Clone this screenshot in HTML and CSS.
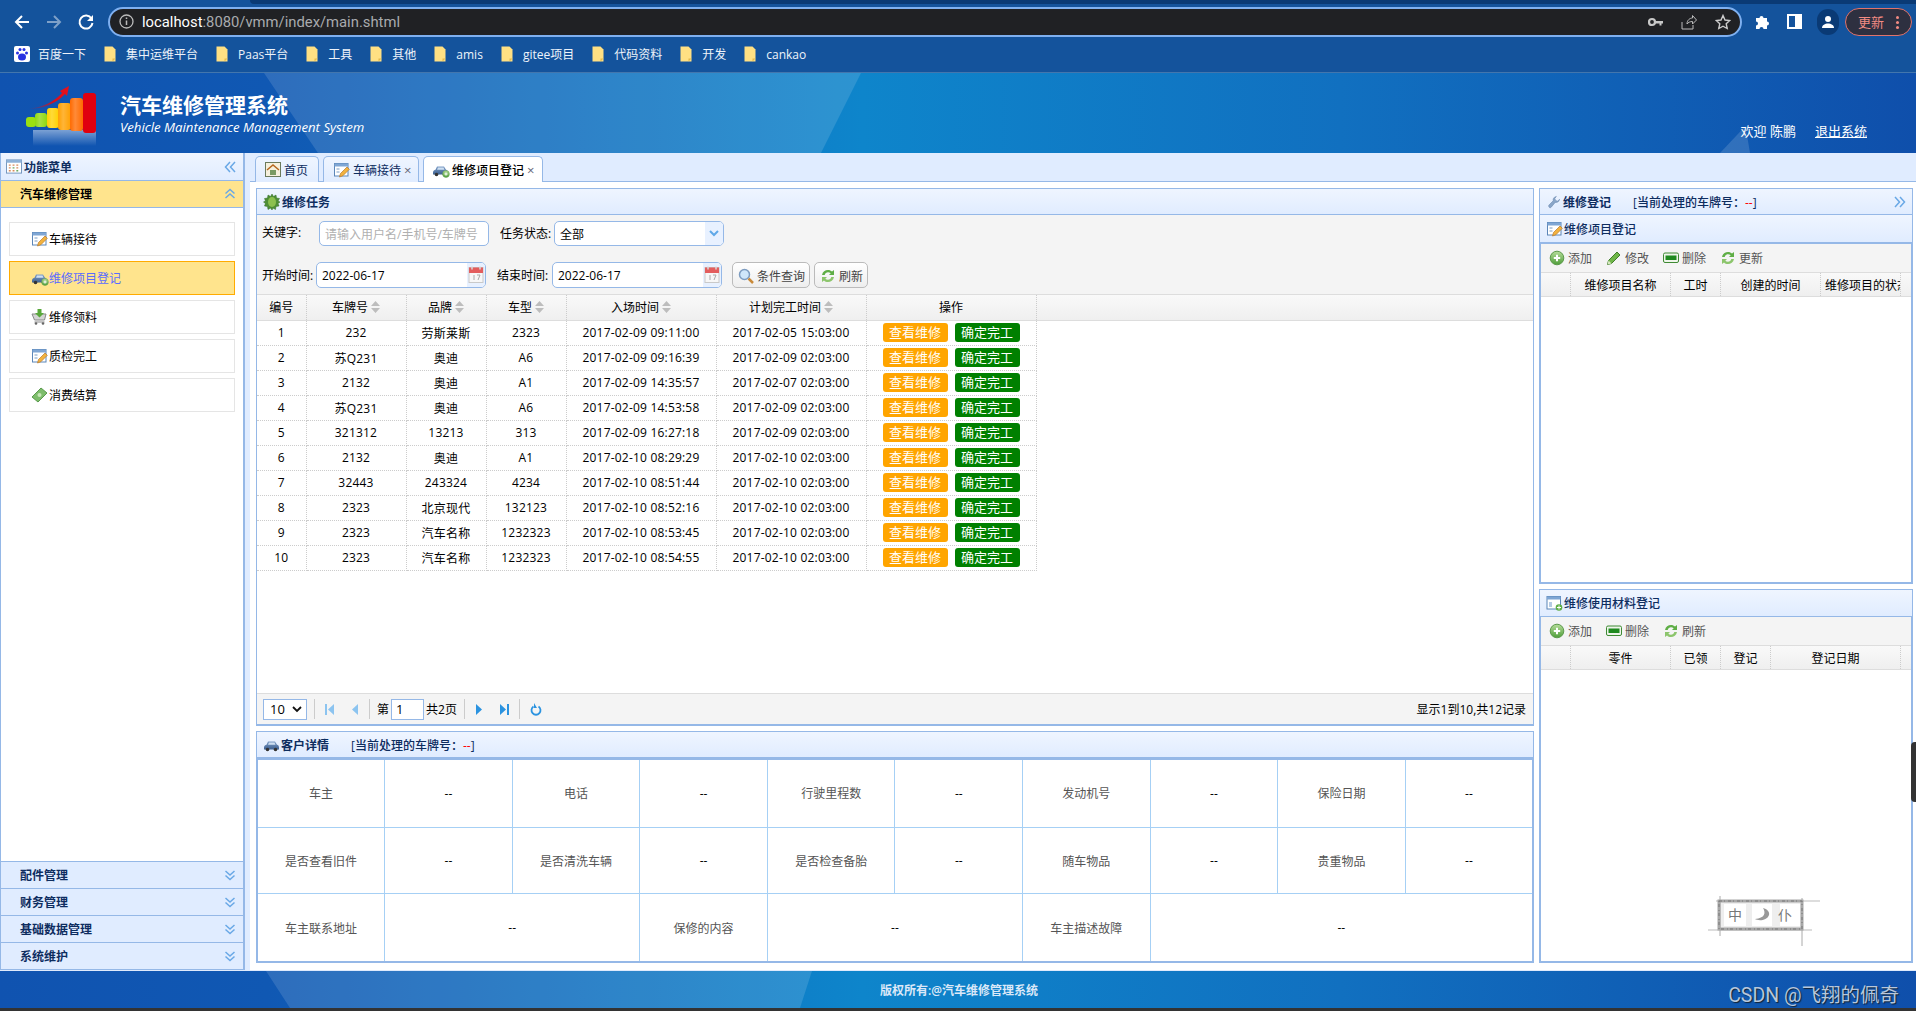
FILE: index.html
```html
<!DOCTYPE html>
<html lang="zh-CN">
<head>
  <meta charset="UTF-8">
  <title>汽车维修管理系统</title>
  <link rel="stylesheet" href="styles.css">
</head>
<body>

  <!-- icons used more than once -->
  <svg class="defs" width="0" height="0">
    <defs>
      <linearGradient id="gGreen" x1="0" y1="0" x2="0" y2="1"><stop offset="0" stop-color="#b6dd9a"/><stop offset="1" stop-color="#4f9e3a"/></linearGradient>
      <linearGradient id="gCar" x1="0" y1="0" x2="0" y2="1"><stop offset="0" stop-color="#7f9fc8"/><stop offset="1" stop-color="#3c5f8f"/></linearGradient>
      <symbol id="i-form" viewBox="0 0 16 16">
        <rect x="1" y="1.500" width="13.500" height="12.500" fill="#fff" stroke="#5b86b8"/>
        <rect x="1" y="1.500" width="13.500" height="3" fill="#7fa6d4"/>
        <path d="M3 7h3M3 10h3" stroke="#7a9cc4"/>
        <path d="M6 15l1-3.500 6.500-6.500 2.300 2.300-6.500 6.500z" fill="#f2b23e" stroke="#b9792a" stroke-width=".7"/>
      </symbol>
      <symbol id="i-car" viewBox="0 0 17 16">
        <path d="M1 10.500c0-2 1.500-2.500 2.500-2.800l1.500-3.200h7l2 3.200c1.200.3 2 1 2 2.800v2h-15z" fill="url(#gCar)"/>
        <path d="M6 5.500h5.500l1 2.200h-7.500z" fill="#cfe0f2"/>
        <circle cx="4.500" cy="12.500" r="1.800" fill="#333"/>
        <circle cx="12.500" cy="12.500" r="1.800" fill="#333"/>
      </symbol>
      <symbol id="i-plus" viewBox="0 0 16 16">
        <circle cx="8" cy="8" r="6.800" fill="url(#gGreen)" stroke="#5d9a4c"/>
        <path d="M8 4.800v6.400M4.800 8h6.400" stroke="#fff" stroke-width="2"/>
      </symbol>
      <symbol id="i-pen" viewBox="0 0 16 16">
        <path d="M1.500 14.500l1-4 8.500-8.500 3 3-8.500 8.500z" fill="#6fb648" stroke="#3f7d2a"/>
        <path d="M1.500 14.500l1-4 3 3z" fill="#d8e8c0"/>
      </symbol>
      <symbol id="i-del" viewBox="0 0 16 16">
        <rect x=".5" y="3" width="15" height="9.500" rx="1.500" fill="#eef5ea" stroke="#3f8a34"/>
        <rect x="2.500" y="5.500" width="11" height="4.500" fill="#1f8a1f"/>
      </symbol>
      <symbol id="i-reload" viewBox="0 0 16 16">
        <path d="M2 7c.6-3.200 3.200-5 6-5 1.700 0 3 .6 4 1.600L14 2v5h-5l1.700-1.700C10 4.600 9 4.300 8 4.300c-1.500 0-2.800.9-3.300 2.700z" fill="#5fae46"/>
        <path d="M14 9c-.6 3.200-3.200 5-6 5-1.700 0-3-.6-4-1.600L2 14V9h5l-1.700 1.700c.7.7 1.700 1 2.700 1 1.500 0 2.800-.9 3.300-2.700z" fill="#8cc56c"/>
      </symbol>
      <symbol id="i-cal" viewBox="0 0 16 18">
        <rect x="1" y="1.500" width="14" height="15" fill="#f7f7f7" stroke="#c9c9c9"/>
        <rect x="1" y="1.500" width="14" height="5.500" fill="#e35d5d"/>
        <path d="M4 .5v3M12 .5v3" stroke="#d9d9d9" stroke-width="1.500"/>
        <path d="M6 9v5M9 9h3l-2 5" stroke="#aaa" fill="none"/>
      </symbol>
      <symbol id="i-dbl" viewBox="0 0 12 12">
        <path d="M1.500 5.500L6 1.500l4.500 4M1.500 10L6 6l4.500 4" fill="none" stroke="#69a8e6" stroke-width="1.500"/>
      </symbol>
      <symbol id="i-folder" viewBox="0 0 12 16">
        <path d="M.5.500h8l3 3v12h-11z" fill="#ffe083"/>
        <path d="M8.500 15.500l3-3h-3z" fill="#e5b94c"/>
      </symbol>
      <symbol id="i-sort" viewBox="0 0 9 12">
        <path d="M4.500 0L9 5H0zM4.500 12L0 7h9z" fill="#bdbdbd"/>
      </symbol>
    </defs>
  </svg>

  <!-- browser chrome -->
  <div class="chrome">
    <div class="tabstrip"></div>
    <div class="toolbar">
      <svg class="nav" width="18" height="18" viewBox="0 0 18 18"><path d="M16 9H3M9 3L3 9l6 6" fill="none" stroke="#fff" stroke-width="2"/></svg>
      <svg class="nav dim" width="18" height="18" viewBox="0 0 18 18"><path d="M2 9h13M9 3l6 6-6 6" fill="none" stroke="#7ea0c8" stroke-width="2"/></svg>
      <svg class="nav" width="18" height="18" viewBox="0 0 18 18"><path d="M14.500 5.500A6.500 6.500 0 1 0 15.500 10" fill="none" stroke="#fff" stroke-width="2"/><path d="M16 2v6h-6z" fill="#fff"/></svg>
      <div class="addr">
        <svg width="15" height="15" viewBox="0 0 15 15"><circle cx="7.500" cy="7.500" r="6.500" fill="none" stroke="#bbb" stroke-width="1.300"/><path d="M7.500 6.500v4.500M7.500 3.500v1.500" stroke="#bbb" stroke-width="1.500"/></svg>
        <span class="url"><b>localhost</b>:8080/vmm/index/main.shtml</span>
        <div class="addr-tools">
          <svg width="15" height="10" viewBox="0 0 15 10"><circle cx="4" cy="5" r="3" fill="none" stroke="#c8c8c8" stroke-width="2.200"/><path d="M7 4h8v2.500h-1.500v2h-2v-2H7z" fill="#c8c8c8"/></svg>
          <svg width="16" height="16" viewBox="0 0 16 16"><path d="M1 8v7h11v-4M6 10c0-4 3-6 5.500-6V1.500L15.500 6l-4 4V7.500C9 7.500 7 8.500 6 10z" fill="none" stroke="#bbb"/></svg>
          <svg width="16" height="16" viewBox="0 0 16 16"><path d="M8 1.500l2 4.500 4.800.500-3.600 3.200 1 4.800L8 12.200l-4.200 2.300 1-4.800L1.200 6.500 6 6z" fill="none" stroke="#ccc" stroke-width="1.400"/></svg>
        </div>
      </div>
      <div class="bar-tools">
        <svg width="16" height="16" viewBox="0 0 16 16"><path d="M2 4h3.500a2 2 0 1 1 4 0H13v3.500a2 2 0 1 1 0 4V15H9.500a2 2 0 1 0-4 0H2v-3.500a2 2 0 1 0 0-4z" fill="#fff"/></svg>
        <svg width="15" height="15" viewBox="0 0 15 15"><rect width="15" height="15" fill="#fff"/><rect x="2" y="2" width="6" height="11" fill="#14539c"/></svg>
        <span class="avatar"><svg width="14" height="14" viewBox="0 0 14 14"><circle cx="7" cy="4" r="3" fill="#fff"/><path d="M1 13c0-3 3-4.500 6-4.500s6 1.500 6 4.500z" fill="#fff"/></svg></span>
        <div class="update">更新<i class="dots"></i></div>
      </div>
    </div>
    <div class="bookmarks">
      <div class="bm baidu">
        <svg width="16" height="16" viewBox="0 0 16 16"><rect width="16" height="16" rx="2" fill="#fff"/><ellipse cx="8" cy="11" rx="4" ry="3.500" fill="#2932e1"/><circle cx="3.500" cy="7" r="1.500" fill="#2932e1"/><circle cx="12.500" cy="7" r="1.500" fill="#2932e1"/><circle cx="6" cy="3.500" r="1.500" fill="#2932e1"/><circle cx="10" cy="3.500" r="1.500" fill="#2932e1"/></svg>
        百度一下
      </div>
      <div class="bm"><svg width="12" height="16"><use href="#i-folder"/></svg>集中运维平台</div>
      <div class="bm"><svg width="12" height="16"><use href="#i-folder"/></svg>Paas平台</div>
      <div class="bm"><svg width="12" height="16"><use href="#i-folder"/></svg>工具</div>
      <div class="bm"><svg width="12" height="16"><use href="#i-folder"/></svg>其他</div>
      <div class="bm"><svg width="12" height="16"><use href="#i-folder"/></svg>amis</div>
      <div class="bm"><svg width="12" height="16"><use href="#i-folder"/></svg>gitee项目</div>
      <div class="bm"><svg width="12" height="16"><use href="#i-folder"/></svg>代码资料</div>
      <div class="bm"><svg width="12" height="16"><use href="#i-folder"/></svg>开发</div>
      <div class="bm"><svg width="12" height="16"><use href="#i-folder"/></svg>cankao</div>
    </div>
  </div>

  <!-- 顶部 -->
  <div class="banner">
    <svg class="logo" width="76" height="64" viewBox="0 0 76 64">
      <defs>
        <linearGradient id="fade" x1="0" y1="0" x2="0" y2="1"><stop offset="0" stop-color="#fff" stop-opacity=".45"/><stop offset="1" stop-color="#fff" stop-opacity="0"/></linearGradient>
        <linearGradient id="shade" x1="0" y1="0" x2="1" y2="0"><stop offset="0" stop-color="#fff" stop-opacity="0"/><stop offset=".4" stop-color="#fff" stop-opacity=".22"/><stop offset="1" stop-color="#fff" stop-opacity="0"/></linearGradient>
        <linearGradient id="tail" x1="0" y1="1" x2="1" y2="0"><stop offset="0" stop-color="#d8101c" stop-opacity="0"/><stop offset=".5" stop-color="#d8101c"/><stop offset="1" stop-color="#e8101c"/></linearGradient>
      </defs>
      <rect x="8" y="44" width="63" height="16" fill="url(#fade)"/>
      <rect x="1" y="31" width="10" height="10" rx="3" fill="#9ae010"/>
      <rect x="10" y="27" width="12" height="14" rx="3" fill="#8fd810"/>
      <rect x="22" y="22" width="12" height="20" rx="3" fill="#ffd000"/>
      <rect x="33" y="17" width="13" height="27" rx="3" fill="#ffa000"/>
      <rect x="45" y="12" width="13" height="33" rx="3" fill="#ff6a00"/>
      <rect x="58" y="7" width="13" height="40" rx="3" fill="#e0000f"/>
      <rect x="10" y="27" width="12" height="14" rx="3" fill="url(#shade)"/>
      <rect x="22" y="22" width="12" height="20" rx="3" fill="url(#shade)"/>
      <rect x="33" y="17" width="13" height="27" rx="3" fill="url(#shade)"/>
      <rect x="45" y="12" width="13" height="33" rx="3" fill="url(#shade)"/>
      <path d="M3 23c15-2 26-7 34-16l-2-2 9-5-2 10-2-2C32 17 18 23 3 23z" fill="url(#tail)"/>
    </svg>
    <div class="brand">
      <div class="brand-cn">汽车维修管理系统</div>
      <div class="brand-en">Vehicle Maintenance Management System</div>
    </div>
    <div class="user">
      <span>欢迎 陈鹏</span>
      <a class="logout">退出系统</a>
    </div>
  </div>

  <div class="main">

    <!-- 左侧菜单 -->
    <div class="side">
      <div class="side-title">
        <svg width="16" height="15" viewBox="0 0 17 15"><rect x=".5" y=".5" width="16" height="14" fill="#fff" stroke="#6f93bd"/><rect x=".5" y=".5" width="16" height="3" fill="#8fb2d8"/><path d="M3 6h2M7 6h2M11 6h2M3 9h2M11 9h2M3 12h2M7 12h2" stroke="#d98a5a" stroke-width="1.500"/><path d="M7 9h2M11 12h2" stroke="#6aa860" stroke-width="1.500"/></svg>
        <span>功能菜单</span>
        <svg class="collapse" width="12" height="12" viewBox="0 0 12 12"><path d="M6 1L1.500 6 6 11M11 1L6.500 6 11 11" fill="none" stroke="#69a8e6" stroke-width="1.500"/></svg>
      </div>
      <div class="acc-head active">
        <span>汽车维修管理</span>
        <svg width="12" height="12"><use href="#i-dbl"/></svg>
      </div>
      <div class="acc-body">
        <div class="menu-item"><svg width="17" height="16"><use href="#i-form"/></svg>车辆接待</div>
        <div class="menu-item current"><span class="car-add"><svg width="17" height="16"><use href="#i-car"/></svg><svg class="mini" width="8" height="8"><use href="#i-plus"/></svg></span>维修项目登记</div>
        <div class="menu-item">
          <svg width="17" height="16" viewBox="0 0 17 16"><path d="M1 5h14l-1.500 6h-10z" fill="#d4d4d4" stroke="#888"/><path d="M3.500 13h10" stroke="#888"/><circle cx="5" cy="14.500" r="1.300" fill="#666"/><circle cx="12" cy="14.500" r="1.300" fill="#666"/><path d="M6.500 0h4v4h2.500L8.500 8.500 4 4h2.500z" fill="#58a83a"/></svg>
          维修领料
        </div>
        <div class="menu-item"><svg width="17" height="16"><use href="#i-form"/></svg>质检完工</div>
        <div class="menu-item">
          <svg width="17" height="16" viewBox="0 0 17 16"><path d="M1 10l9-9 6 5-9 9z" fill="#7dbd6b" stroke="#5a9a4c"/><circle cx="8.500" cy="8" r="2" fill="#c7e6b8"/></svg>
          消费结算
        </div>
      </div>
      <div class="acc-head"><span>配件管理</span><svg class="down" width="12" height="12"><use href="#i-dbl"/></svg></div>
      <div class="acc-head"><span>财务管理</span><svg class="down" width="12" height="12"><use href="#i-dbl"/></svg></div>
      <div class="acc-head"><span>基础数据管理</span><svg class="down" width="12" height="12"><use href="#i-dbl"/></svg></div>
      <div class="acc-head"><span>系统维护</span><svg class="down" width="12" height="12"><use href="#i-dbl"/></svg></div>
    </div>

    <!-- 内容区 -->
    <div class="content">
      <div class="tabs">
        <div class="tab">
          <svg width="16" height="15" viewBox="0 0 16 15"><rect x=".5" y=".5" width="15" height="14" fill="#f6f0dc" stroke="#6b7a5c"/><path d="M2 8l6-5 6 5" fill="none" stroke="#b5651d" stroke-width="1.500"/><rect x="5" y="8" width="6" height="5" fill="#7a9a62"/></svg>
          首页
        </div>
        <div class="tab"><svg width="17" height="16"><use href="#i-form"/></svg>车辆接待<i class="close">×</i></div>
        <div class="tab selected"><span class="car-add"><svg width="17" height="16"><use href="#i-car"/></svg><svg class="mini" width="8" height="8"><use href="#i-plus"/></svg></span>维修项目登记<i class="close">×</i></div>
      </div>

      <div class="tab-body">
        <div class="col-center">

          <div class="panel task">
            <div class="panel-head">
              <svg width="18" height="18" viewBox="0 0 18 18"><path d="M9 1l1.500 2.500L13 2l.5 3 3 .5-1.500 2.500 2 1-2 1.500 1 2.500-3 .5-.5 3-2.500-1.500L9 17l-1.500-2-2.500 1.500-.5-3-3-.5 1-2.500-2-1.500 2-1L1.500 5.500l3-.5L5 2l2.500 1.500z" fill="#4f8e35" stroke="#2e6a20" stroke-width=".5"/><ellipse cx="9" cy="9" rx="4" ry="5" fill="#8cc04f"/></svg>
              <span>维修任务</span>
            </div>
            <div class="filters">
              <div class="filter-row first">
                <label class="lbl-key">关键字:</label>
                <div class="field keyword"><span class="ph">请输入用户名/手机号/车牌号</span></div>
                <label class="lbl-status">任务状态:</label>
                <div class="field select"><span>全部</span>
                  <i class="addon"><svg width="10" height="7" viewBox="0 0 10 7"><path d="M1 1l4 4 4-4" fill="none" stroke="#5fa8e8" stroke-width="2"/></svg></i>
                </div>
              </div>
              <div class="filter-row">
                <label>开始时间:</label>
                <div class="field date"><span>2022-06-17</span><i class="addon"><svg width="16" height="18"><use href="#i-cal"/></svg></i></div>
                <label class="lbl-end">结束时间:</label>
                <div class="field date"><span>2022-06-17</span><i class="addon"><svg width="16" height="18"><use href="#i-cal"/></svg></i></div>
                <div class="btn search">
                  <svg width="16" height="16" viewBox="0 0 16 16"><circle cx="6.500" cy="6.500" r="5" fill="#cfe6fa" stroke="#7d9cc0" stroke-width="1.500"/><path d="M10.500 10.500L15 15" stroke="#c98a3a" stroke-width="2.500"/></svg>
                  条件查询
                </div>
                <div class="btn"><svg width="16" height="16"><use href="#i-reload"/></svg>刷新</div>
              </div>
            </div>

            <div class="grid-wrap">
              <table class="grid">
                <colgroup>
                  <col class="w49"><col class="w100"><col class="w80"><col class="w80"><col class="w150"><col class="w150"><col class="w170">
                </colgroup>
                <thead>
                  <tr>
                    <th>编号</th>
                    <th>车牌号<svg class="sort" width="9" height="12"><use href="#i-sort"/></svg></th>
                    <th>品牌<svg class="sort" width="9" height="12"><use href="#i-sort"/></svg></th>
                    <th>车型<svg class="sort" width="9" height="12"><use href="#i-sort"/></svg></th>
                    <th>入场时间<svg class="sort" width="9" height="12"><use href="#i-sort"/></svg></th>
                    <th>计划完工时间<svg class="sort" width="9" height="12"><use href="#i-sort"/></svg></th>
                    <th>操作</th>
                  </tr>
                </thead>
                <tbody>
                  <tr><td>1</td><td>232</td><td>劳斯莱斯</td><td>2323</td><td>2017-02-09 09:11:00</td><td>2017-02-05 15:03:00</td><td class="ops"><a class="op view">查看维修</a><a class="op done">确定完工</a></td></tr>
                  <tr><td>2</td><td>苏Q231</td><td>奥迪</td><td>A6</td><td>2017-02-09 09:16:39</td><td>2017-02-09 02:03:00</td><td class="ops"><a class="op view">查看维修</a><a class="op done">确定完工</a></td></tr>
                  <tr><td>3</td><td>2132</td><td>奥迪</td><td>A1</td><td>2017-02-09 14:35:57</td><td>2017-02-07 02:03:00</td><td class="ops"><a class="op view">查看维修</a><a class="op done">确定完工</a></td></tr>
                  <tr><td>4</td><td>苏Q231</td><td>奥迪</td><td>A6</td><td>2017-02-09 14:53:58</td><td>2017-02-09 02:03:00</td><td class="ops"><a class="op view">查看维修</a><a class="op done">确定完工</a></td></tr>
                  <tr><td>5</td><td>321312</td><td>13213</td><td>313</td><td>2017-02-09 16:27:18</td><td>2017-02-09 02:03:00</td><td class="ops"><a class="op view">查看维修</a><a class="op done">确定完工</a></td></tr>
                  <tr><td>6</td><td>2132</td><td>奥迪</td><td>A1</td><td>2017-02-10 08:29:29</td><td>2017-02-10 02:03:00</td><td class="ops"><a class="op view">查看维修</a><a class="op done">确定完工</a></td></tr>
                  <tr><td>7</td><td>32443</td><td>243324</td><td>4234</td><td>2017-02-10 08:51:44</td><td>2017-02-10 02:03:00</td><td class="ops"><a class="op view">查看维修</a><a class="op done">确定完工</a></td></tr>
                  <tr><td>8</td><td>2323</td><td>北京现代</td><td>132123</td><td>2017-02-10 08:52:16</td><td>2017-02-10 02:03:00</td><td class="ops"><a class="op view">查看维修</a><a class="op done">确定完工</a></td></tr>
                  <tr><td>9</td><td>2323</td><td>汽车名称</td><td>1232323</td><td>2017-02-10 08:53:45</td><td>2017-02-10 02:03:00</td><td class="ops"><a class="op view">查看维修</a><a class="op done">确定完工</a></td></tr>
                  <tr><td>10</td><td>2323</td><td>汽车名称</td><td>1232323</td><td>2017-02-10 08:54:55</td><td>2017-02-10 02:03:00</td><td class="ops"><a class="op view">查看维修</a><a class="op done">确定完工</a></td></tr>
                </tbody>
              </table>
            </div>

            <div class="pager">
              <div class="page-size">10<svg width="10" height="7" viewBox="0 0 10 7"><path d="M1 1l4 4 4-4" fill="none" stroke="#111" stroke-width="1.800"/></svg></div>
              <i class="sep"></i>
              <svg class="pg" width="10" height="13" viewBox="0 0 10 13"><path d="M0 1h2v11H0zM9 1v11L3 6.500z" fill="#8cc4f0"/></svg>
              <svg class="pg" width="8" height="13" viewBox="0 0 8 13"><path d="M7 1v11L1 6.500z" fill="#8cc4f0"/></svg>
              <i class="sep"></i>
              <span class="pg-text">第</span>
              <div class="page-no">1</div>
              <span class="pg-text">共2页</span>
              <i class="sep"></i>
              <svg class="pg" width="8" height="13" viewBox="0 0 8 13"><path d="M1 1v11l6-5.500z" fill="#2b93e0"/></svg>
              <svg class="pg" width="10" height="13" viewBox="0 0 10 13"><path d="M8 1h2v11H8zM1 1v11l6-5.500z" fill="#2b93e0"/></svg>
              <i class="sep"></i>
              <svg class="pg" width="12" height="13" viewBox="0 0 12 13"><path d="M8.500 3.500a4.500 4.500 0 1 1-5 0" fill="none" stroke="#2b93e0" stroke-width="1.800"/><path d="M4 0v5h3z" fill="#2b93e0"/></svg>
              <span class="pg-info">显示1到10,共12记录</span>
            </div>
          </div>

          <div class="panel customer">
            <div class="panel-head">
              <svg width="17" height="16"><use href="#i-car"/></svg>
              <span>客户详情</span>
              <span class="plate">[当前处理的车牌号：<em>--</em>]</span>
            </div>
            <table class="detail">
              <tr><th>车主</th><td>--</td><th>电话</th><td>--</td><th>行驶里程数</th><td>--</td><th>发动机号</th><td>--</td><th>保险日期</th><td>--</td></tr>
              <tr><th>是否查看旧件</th><td>--</td><th>是否清洗车辆</th><td>--</td><th>是否检查备胎</th><td>--</td><th>随车物品</th><td>--</td><th>贵重物品</th><td>--</td></tr>
              <tr><th>车主联系地址</th><td colspan="2">--</td><th>保修的内容</th><td colspan="2">--</td><th>车主描述故障</th><td colspan="3">--</td></tr>
            </table>
          </div>
        </div>

        <div class="col-right">
          <div class="panel right-head">
            <div class="panel-head">
              <svg width="16" height="16" viewBox="-2 -2 20 20"><path d="M2 14.500c-1-1-1-2 0-3l5-5c-.5-2 .5-5 4-5.500l-2 2.500 1 2.500 2.500 1L15 4.500c-.5 3.500-3.500 4.500-5.500 4l-5 6c-1 1-2 1-2.500 0z" fill="#8aa6c8" stroke="#5f7ea6" stroke-width=".6"/></svg>
              <span>维修登记</span>
              <span class="plate">[当前处理的车牌号：<em>--</em>]</span>
              <svg class="expand" width="12" height="12" viewBox="0 0 12 12"><path d="M1 1l4.500 5L1 11M6 1l4.500 5L6 11" fill="none" stroke="#69a8e6" stroke-width="1.500"/></svg>
            </div>
          </div>

          <div class="panel sub items">
            <div class="panel-head">
              <svg width="17" height="16"><use href="#i-form"/></svg>
              <span class="plain">维修项目登记</span>
            </div>
            <div class="tools">
              <div class="tool"><svg width="16" height="16"><use href="#i-plus"/></svg>添加</div>
              <div class="tool"><svg width="16" height="16"><use href="#i-pen"/></svg>修改</div>
              <div class="tool"><svg width="16" height="16"><use href="#i-del"/></svg>删除</div>
              <div class="tool"><svg width="16" height="16"><use href="#i-reload"/></svg>更新</div>
            </div>
            <div class="mini-head">
              <div class="c30"></div><div class="c100">维修项目名称</div><div class="c50">工时</div><div class="c100">创建的时间</div><div class="c80">维修项目的状态</div>
            </div>
            <div class="blank"></div>
          </div>

          <div class="panel sub parts">
            <div class="panel-head">
              <svg width="17" height="16" viewBox="0 0 17 16"><rect x="1" y="1.500" width="13.500" height="12.500" fill="#fff" stroke="#5b86b8"/><rect x="1" y="1.500" width="13.500" height="3" fill="#7fa6d4"/><path d="M3 7h3v5H3z" fill="#b5cbe4"/><circle cx="13" cy="12.500" r="3.300" fill="#5fae46"/><path d="M13 10.500v4M11 12.500h4" stroke="#fff"/></svg>
              <span class="plain">维修使用材料登记</span>
            </div>
            <div class="tools">
              <div class="tool"><svg width="16" height="16"><use href="#i-plus"/></svg>添加</div>
              <div class="tool"><svg width="16" height="16"><use href="#i-del"/></svg>删除</div>
              <div class="tool"><svg width="16" height="16"><use href="#i-reload"/></svg>刷新</div>
            </div>
            <div class="mini-head">
              <div class="c30"></div><div class="c100">零件</div><div class="c50">已领</div><div class="c50">登记</div><div class="c130">登记日期</div>
            </div>
            <div class="blank">
              <div class="stamp">
                <svg class="stamp-box" width="114" height="50" viewBox="0 0 114 50">
                  <rect x="11" y="6" width="83" height="26" fill="#eee"/>
                  <rect x="16" y="8" width="22" height="22" fill="#fff"/>
                  <rect x="44" y="8" width="20" height="22" fill="#fff"/>
                  <rect x="72" y="8" width="20" height="22" fill="#fff"/>
                  <path d="M0 34h104M8 5h104" stroke="#bbb" fill="none"/>
                  <path d="M12 0v40M94 2v48" stroke="#aaa" fill="none"/>
                  <rect x="11" y="5" width="83" height="28" fill="none" stroke="#a8a8a8" stroke-width="3"/>
                  <rect x="11" y="5" width="83" height="28" fill="none" stroke="#777" stroke-width="1" stroke-dasharray="3 2 1 3"/>
                  <path d="M55 12c3 5 2 10-8 11 3 2 12 2 14-4 1-3-2-6-6-7z" fill="#999"/>
                </svg>
                <span class="stamp-char one">中</span>
                <span class="stamp-char two">仆</span>
              </div>
            </div>
          </div>
        </div>
      </div>
    </div>
  </div>

  <!-- 底部 -->
  <div class="footer">
    <span class="copy">版权所有:@汽车维修管理系统</span>
    <span class="mark">CSDN @飞翔的佩奇</span>
  </div>
  <div class="desk-edge"></div>
  <div class="side-handle"></div>

</body>
</html>
```

FILE: styles.css
```css
* {
  box-sizing: border-box;
}

html, body {
  margin: 0;
  height: 100%;
  overflow: hidden;
}

body {
  width: 1916px;
  height: 1011px;
  display: flex;
  flex-direction: column;
  position: relative;
  font-family: "Open Sans", "Noto Sans CJK SC", sans-serif;
  font-size: 12px;
  color: #000;
}

.defs {
  position: absolute;
}

i {
  font-style: normal;
}

/* ---- browser ---- */
.chrome {
  height: 73px;
  flex: none;
  background: #14539c;
  border-bottom: 1px solid #4376ad;
  color: #fff;
}

.tabstrip {
  height: 4px;
  margin-left: 250px;
  background: #0a3a75;
  border-bottom-left-radius: 4px;
}

.toolbar {
  height: 33px;
  display: flex;
  align-items: center;
  padding: 2px 0 0 13px;
}

.nav {
  margin-right: 14px;
}

.addr {
  width: 1634px;
  height: 30px;
  flex: none;
  margin-left: -1px;
  display: flex;
  align-items: center;
  gap: 8px;
  padding: 0 9px 0 9px;
  background: #202124;
  border: 2px solid #7fb0f0;
  border-radius: 15px;
}

.url {
  font-family: "Roboto", sans-serif;
  font-size: 14.8px;
  color: #a9abae;
}

.url b {
  font-weight: 400;
  color: #fff;
}

.addr-tools {
  margin-left: auto;
  display: flex;
  align-items: center;
  gap: 18px;
}

.bar-tools {
  display: flex;
  align-items: center;
  gap: 17px;
  margin-left: 12px;
}

.avatar {
  width: 22px;
  height: 26px;
  margin-left: -2px;
  display: flex;
  align-items: center;
  justify-content: center;
  background: #0a3a75;
  border-radius: 13px;
}

.update {
  width: 67px;
  height: 28px;
  margin-left: -11px;
  display: flex;
  align-items: center;
  padding-left: 12px;
  color: #f28b82;
  font-size: 13px;
  background: #2e3040;
  border: 1px solid #e0736c;
  border-radius: 14px;
  position: relative;
}

.dots {
  position: absolute;
  right: 12px;
  top: 7px;
  width: 3px;
  height: 3px;
  background: #f28b82;
  border-radius: 50%;
  box-shadow: 0 5px 0 #f28b82, 0 10px 0 #f28b82;
}

.bookmarks {
  height: 35px;
  display: flex;
  align-items: center;
  gap: 18px;
  padding: 0 0 1px 14px;
  font-size: 12px;
}

.bm {
  display: flex;
  align-items: center;
  gap: 10px;
  color: #eef3fa;
}

.baidu {
  gap: 8px;
}

/* ---- banner ---- */
.banner {
  height: 80px;
  flex: none;
  position: relative;
  display: flex;
  color: #fff;
  background: linear-gradient(to right, #1053b0 0, #1058b3 14%, #0e85cb 45%, #1170c0 70%, #0f4fab 100%);
}

.banner::before {
  content: "";
  position: absolute;
  inset: 0;
  background: rgba(255, 255, 255, .13);
  clip-path: polygon(264px 0, 861px 0, 821px 100%, 318px 100%);
}

.banner::after {
  content: "";
  position: absolute;
  left: 1720px;
  bottom: 0;
  width: 30px;
  height: 27px;
  background: rgba(255, 255, 255, .14);
  clip-path: polygon(85% 0, 100% 100%, 0 100%);
}

.logo {
  position: relative;
  z-index: 1;
  margin: 13px 0 0 25px;
}

.brand {
  position: relative;
  z-index: 1;
  margin: 18px 0 0 19px;
}

.brand-cn {
  font-size: 21px;
  font-weight: 700;
  line-height: 28px;
}

.brand-en {
  font-size: 13.2px;
  font-style: italic;
  line-height: 18px;
  margin-top: -1px;
}

.user {
  position: relative;
  z-index: 1;
  margin: 48px 0 0 auto;
  padding-right: 49px;
  display: flex;
  gap: 19px;
  font-size: 13px;
  line-height: 20px;
}

.logout {
  text-decoration: underline;
}

/* ---- main ---- */
.main {
  height: 817px;
  flex: none;
  display: flex;
  background: #e0ecff;
}

.side {
  width: 245px;
  flex: none;
  display: flex;
  flex-direction: column;
  border: 1px solid #95b8e7;
  border-top: 0;
  border-right-width: 2px;
}

.side-title {
  height: 28px;
  flex: none;
  display: flex;
  align-items: center;
  gap: 2px;
  padding: 0 7px 0 5px;
  font-weight: 600;
  color: #0e2d5f;
  background: linear-gradient(to bottom, #eff5ff, #e0ecff);
  border-bottom: 1px solid #95b8e7;
}

.collapse {
  margin-left: auto;
}

.acc-head {
  height: 27px;
  flex: none;
  display: flex;
  align-items: center;
  justify-content: space-between;
  padding: 0 7px 0 19px;
  font-weight: 600;
  color: #0e2d5f;
  background: #e0ecff;
  border-top: 1px solid #95b8e7;
}

.acc-head.active {
  color: #000;
  background: #ffe48d;
  border-top: 0;
  border-bottom: 1px solid #95b8e7;
}

.acc-head .down {
  transform: rotate(180deg);
}

.acc-body {
  flex: 1;
  display: flex;
  flex-direction: column;
  gap: 5px;
  padding: 14px 8px 0;
  background: #fff;
}

.menu-item {
  height: 34px;
  display: flex;
  align-items: center;
  gap: 1px;
  padding-left: 21px;
  border: 1px solid #e5e5e5;
}

.menu-item.current {
  color: #5b6cff;
  background: #ffe48d;
  border-color: #ffab00;
}

.car-add {
  position: relative;
  display: flex;
}

.mini {
  position: absolute;
  right: -1px;
  bottom: 0;
}

.content {
  flex: 1;
  min-width: 0;
  margin-left: 5px;
  display: flex;
  flex-direction: column;
}

.tabs {
  height: 29px;
  flex: none;
  display: flex;
  gap: 4px;
  padding: 3px 0 0 5px;
  border-bottom: 1px solid #95b8e7;
}

.tab {
  height: 26px;
  display: flex;
  align-items: center;
  gap: 3px;
  padding: 0 4px 0 9px;
  color: #0e2d5f;
  background: linear-gradient(to bottom, #eff5ff, #e0ecff);
  border: 1px solid #95b8e7;
  border-bottom: 0;
  border-radius: 5px 5px 0 0;
}

.tab:first-child {
  width: 64px;
}

.tab:nth-child(2) {
  width: 96px;
}

.tab.selected {
  width: 120px;
  padding-left: 8px;
  height: 27px;
  color: #000;
  background: #fff;
  font-weight: 500;
}

.close {
  color: #667;
  font-size: 13px;
}

.tab-body {
  flex: 1;
  min-height: 0;
  display: flex;
  gap: 5px;
  padding: 6px 3px 7px 6px;
  background: #fff;
}

.col-center {
  width: 1278px;
  flex: none;
  display: flex;
  flex-direction: column;
  gap: 5px;
}

.panel {
  display: flex;
  flex-direction: column;
  background: #fff;
}

.panel-head {
  height: 27px;
  flex: none;
  display: flex;
  align-items: center;
  gap: 1px;
  padding-left: 6px;
  font-weight: 600;
  color: #0e2d5f;
  background: linear-gradient(to bottom, #eff5ff, #e0ecff);
  border: 1px solid #95b8e7;
}

.panel-head .plain {
  font-weight: 500;
}

.plate {
  margin-left: 21px;
  font-weight: 500;
}

.plate em {
  color: #f00;
  font-style: normal;
}

.task {
  height: 538px;
  flex: none;
  border: 1px solid #95b8e7;
  border-top: 0;
}

.task .panel-head {
  margin: 0 -1px;
}

.filters {
  height: 79px;
  flex: none;
  background: #f4f4f4;
  padding: 6px 0 0 5px;
}

.filter-row {
  height: 26px;
  display: flex;
  align-items: center;
}

.filter-row.first {
  height: 25px;
  margin-bottom: 16px;
}

.lbl-key {
  width: 57px;
  padding-bottom: 4px;
}

.lbl-status {
  margin-left: 11px;
  width: 54px;
  padding-bottom: 2px;
}

.lbl-end {
  margin-left: 11px;
  width: 55px;
}

.filter-row label:first-child:not(.lbl-key) {
  width: 54px;
}

.field {
  height: 100%;
  display: flex;
  align-items: center;
  padding-left: 5px;
  background: #fff;
  border: 1px solid #95b8e7;
  border-radius: 5px;
  overflow: hidden;
}

.keyword {
  width: 170px;
}

.ph {
  color: #b0b0b0;
}

.select {
  width: 170px;
}

.date {
  width: 170px;
}

.addon {
  margin-left: auto;
  width: 18px;
  height: 100%;
  display: flex;
  align-items: center;
  justify-content: center;
  background: #e8f1ff;
}

.btn {
  height: 100%;
  margin-left: 4px;
  display: flex;
  align-items: center;
  gap: 3px;
  padding: 2px 4px 0 5px;
  color: #444;
  background: linear-gradient(to bottom, #fff, #eee);
  border: 1px solid #bbb;
  border-radius: 5px;
}

.btn.search {
  width: 78px;
  margin-left: 10px;
}

/* header band runs the whole width, past the last column */
.grid-wrap {
  flex: 1;
  min-height: 0;
  overflow: hidden;
  border-top: 1px solid #ddd;
  background:
    linear-gradient(#ddd, #ddd) 0 25px / 100% 1px no-repeat,
    linear-gradient(to bottom, #f9f9f9, #efefef) 0 0 / 100% 25px no-repeat,
    #fff;
}

.grid {
  border-collapse: collapse;
  table-layout: fixed;
  width: 779px;
}

.w49 { width: 49px; }
.w80 { width: 80px; }
.w100 { width: 100px; }
.w150 { width: 150px; }
.w170 { width: 170px; }

.grid th {
  height: 25px;
  padding: 0;
  font-weight: 400;
  border-right: 1px dotted #ccc;
  border-bottom: 1px solid #ddd;
}

.grid td {
  height: 25px;
  padding: 0;
  text-align: center;
  letter-spacing: .2px;
  border-right: 1px dotted #ccc;
  border-bottom: 1px dotted #ccc;
  white-space: nowrap;
}

.sort {
  margin-left: 3px;
  vertical-align: -1px;
}

.grid td.ops {
  font-size: 0;
  letter-spacing: 0;
}

.op {
  display: inline-block;
  width: 65px;
  height: 19px;
  line-height: 19px;
  font-size: 13px;
  color: #fff;
  border-radius: 3px;
}

.op + .op {
  margin-left: 7px;
}

.view {
  background: #ffa500;
}

.done {
  background: #008000;
}

.pager {
  height: 32px;
  flex: none;
  display: flex;
  align-items: center;
  padding: 0 7px 0 6px;
  background: #f4f4f4;
  border-top: 1px solid #ddd;
  border-bottom: 1px solid #95b8e7;
}

.page-size {
  width: 44px;
  height: 21px;
  display: flex;
  align-items: center;
  justify-content: space-between;
  padding: 0 4px 0 6px;
  font-size: 13px;
  background: #fff;
  border: 1px solid #95b8e7;
}

.sep {
  width: 1px;
  height: 20px;
  background: #ccc;
  margin: 0 7px;
}

.pg {
  margin: 0 3px;
}

.pg + .pg {
  margin-left: 13px;
}

.pg-text {
  flex: none;
}

.page-no {
  width: 33px;
  height: 21px;
  margin: 0 2px 0 2px;
  line-height: 19px;
  padding-left: 4px;
  font-size: 13px;
  background: #fff;
  border: 1px solid #95b8e7;
}

.pg-info {
  margin-left: auto;
}

.customer {
  flex: 1;
  min-height: 0;
}

.detail {
  flex: 1;
  width: 100%;
  height: 205px;
  border-collapse: collapse;
  table-layout: fixed;
  border: 2px solid #95b8e7;
}

.detail th, .detail td {
  padding: 0;
  text-align: center;
  font-weight: 400;
  border: 1px solid #a6d0f5;
}

.detail th {
  color: #555;
}

/* ---- right ---- */
.col-right {
  flex: 1;
  min-width: 0;
  display: flex;
  flex-direction: column;
}

.right-head {
  flex: none;
}

.expand {
  margin-left: auto;
  margin-right: 6px;
}

.sub {
  border: 2px solid #95b8e7;
  border-top: 0;
}

.sub .panel-head {
  height: 29px;
  margin: 0 -2px;
  border-top: 0;
  border-bottom-width: 2px;
}

.items {
  height: 369px;
  flex: none;
  margin-bottom: 5px;
}

.parts {
  flex: 1;
  min-height: 0;
}

.parts .panel-head {
  height: 28px;
  border-top: 1px solid #95b8e7;
  border-bottom-width: 1px;
}

.tools {
  height: 28px;
  flex: none;
  display: flex;
  align-items: center;
  gap: 14px;
  padding-left: 8px;
  background: #f4f4f4;
  color: #555;
}

.tool {
  display: flex;
  align-items: center;
  gap: 3px;
}

.mini-head {
  height: 25px;
  flex: none;
  display: flex;
  overflow: hidden;
  background: linear-gradient(to bottom, #f9f9f9, #efefef);
  border-top: 1px solid #ddd;
  border-bottom: 1px solid #ddd;
}

.mini-head div {
  flex: none;
  display: flex;
  align-items: center;
  justify-content: center;
  overflow: hidden;
  white-space: nowrap;
  border-right: 1px dotted #ccc;
}

.c30 { width: 30px; }
.c50 { width: 50px; }
.c80 { width: 80px; }
.c100 { width: 100px; }
.c130 { width: 130px; }

.mini-head .c80 {
  justify-content: flex-start;
  padding-left: 4px;
}

.blank {
  flex: 1;
  min-height: 0;
  background: #fff;
  position: relative;
}

.stamp {
  position: absolute;
  left: 167px;
  bottom: 15px;
  width: 114px;
  height: 50px;
}

.stamp-box {
  display: block;
}

.stamp-char {
  position: absolute;
  top: 10px;
  font-size: 14px;
  line-height: 18px;
  color: #777;
}

.stamp-char.one {
  left: 20px;
}

.stamp-char.two {
  left: 70px;
}

/* ---- footer ---- */
.footer {
  height: 38px;
  flex: none;
  position: relative;
  display: flex;
  align-items: center;
  justify-content: center;
  color: #dbe8f8;
  background: linear-gradient(to right, #1053b0 0, #1058b3 14%, #0e85cb 45%, #1170c0 70%, #0f4fab 100%);
  border-top: 1px solid #dfeafc;
}

.footer::before {
  content: "";
  position: absolute;
  inset: 0;
  background: rgba(255, 255, 255, .13);
  clip-path: polygon(266px 0, 812px 0, 800px 100%, 290px 100%);
}

.copy {
  position: relative;
  font-weight: 600;
  margin-left: 2px;
}

.mark {
  position: absolute;
  right: 17px;
  top: 8px;
  font-family: "Roboto", "Noto Sans CJK SC", sans-serif;
  font-size: 19.5px;
  color: #b7c7dc;
  text-shadow: 1px 1px 1px #123;
}

.desk-edge {
  height: 3px;
  flex: none;
  background: #333;
}

.side-handle {
  position: absolute;
  right: 0;
  top: 742px;
  width: 5px;
  height: 60px;
  background: #333;
  border-radius: 4px 0 0 4px;
}
```
